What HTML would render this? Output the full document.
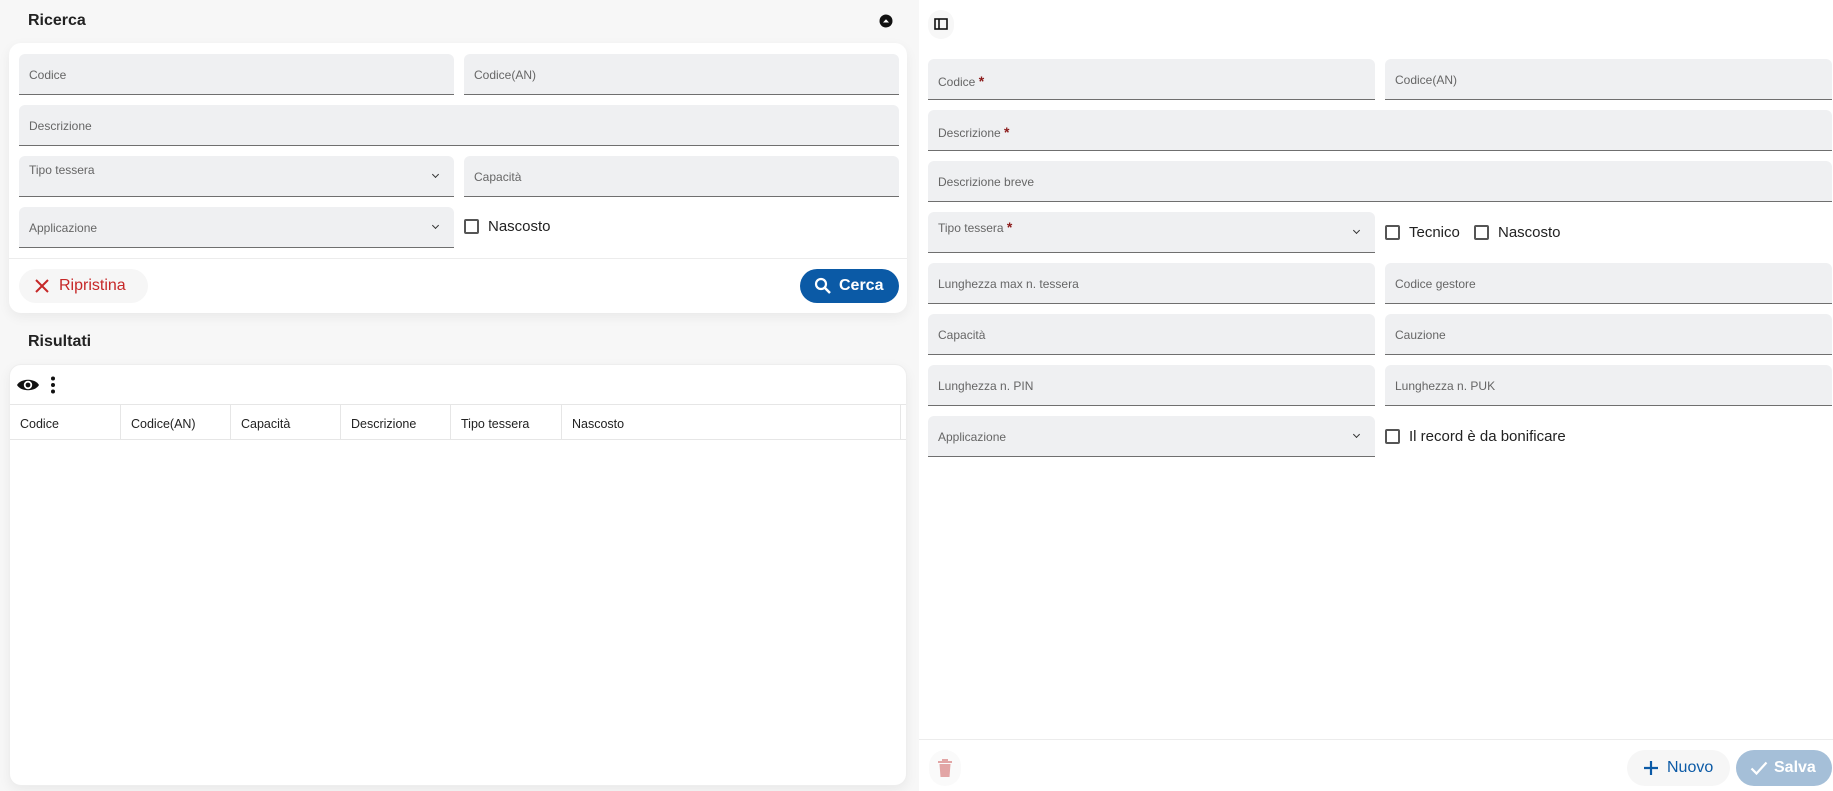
<!DOCTYPE html>
<html><head><meta charset="utf-8"><style>
*{box-sizing:border-box;margin:0;padding:0}
body{width:1833px;height:791px;overflow:hidden;font-family:"Liberation Sans",sans-serif;background:#f7f7f7;position:relative;color:#1d1d1d}
.abs{position:absolute}
.f{position:absolute;background:#eff0f2;border-bottom:1px solid #6f6f6f;border-radius:6px 6px 0 0;height:41px}
.f span{position:absolute;left:10px;top:14px;font-size:12px;color:#666}
.f span.t{top:7px}
.f .req{color:#8b1a1a;font-size:14px}
.f .chev{position:absolute;right:16px;top:16px;width:5px;height:5px;border-right:1.3px solid #333;border-bottom:1.3px solid #333;transform:rotate(45deg)}
.cb{position:absolute;display:flex;align-items:center;font-size:15px;color:#222}
.cb i{display:inline-block;width:15px;height:15px;border:2px solid #555;border-radius:2px;margin-right:9px}
.title{position:absolute;font-size:16px;font-weight:600;color:#222}
.card{position:absolute;background:#fff;border-radius:12px;box-shadow:0 4px 12px rgba(0,0,0,.06)}
</style></head><body>
<div class="title" style="left:28px;top:12px">Ricerca</div>
<svg class="abs" style="left:879px;top:14px" width="14" height="14" viewBox="0 0 14 14"><circle cx="7" cy="7" r="6.5" fill="#111"/><path d="M4 8.5L7 5.2 10 8.5z" fill="#fff"/></svg>
<div class="card" style="left:9px;top:43px;width:898px;height:270px"></div>
<div class="f" style="left:19px;top:54px;width:435px"><span>Codice</span></div>
<div class="f" style="left:464px;top:54px;width:435px"><span>Codice(AN)</span></div>
<div class="f" style="left:19px;top:105px;width:880px"><span>Descrizione</span></div>
<div class="f" style="left:19px;top:156px;width:435px"><span class="t">Tipo tessera</span><div class="chev"></div></div>
<div class="f" style="left:464px;top:156px;width:435px"><span>Capacità</span></div>
<div class="f" style="left:19px;top:207px;width:435px"><span>Applicazione</span><div class="chev"></div></div>
<div class="cb" style="left:464px;top:218px"><i></i>Nascosto</div>
<div class="abs" style="left:9px;top:258px;width:898px;height:1px;background:#ececec"></div>
<div class="abs" style="left:19px;top:269px;width:129px;height:34px;border-radius:17px;background:#f6f6f6;color:#c62828;font-size:16px;display:flex;align-items:center;padding-left:16px">
<svg width="14" height="14" viewBox="0 0 14 14" style="margin-right:10px"><path d="M1 1L13 13M13 1L1 13" stroke="#c62828" stroke-width="2"/></svg>Ripristina</div>
<div class="abs" style="left:800px;top:269px;width:99px;height:34px;border-radius:17px;background:#0b5aa6;color:#fff;font-size:16px;font-weight:bold;display:flex;align-items:center;padding-left:14px">
<svg width="18" height="18" viewBox="0 0 18 18" style="margin-right:7px"><circle cx="7" cy="7" r="5" stroke="#fff" stroke-width="2.2" fill="none"/><path d="M10.5 10.5L16 16" stroke="#fff" stroke-width="2.5"/></svg>Cerca</div>

<div class="title" style="left:28px;top:333px">Risultati</div>
<div class="card" style="left:9px;top:364px;width:898px;height:422px;border:1px solid #eee">
<svg class="abs" style="left:6px;top:12px" width="24" height="16" viewBox="0 0 24 16"><path d="M1 8C5 1 19 1 23 8 19 15 5 15 1 8z" fill="#111"/><circle cx="12" cy="8" r="4.2" fill="#fff"/><circle cx="12" cy="8" r="2.4" fill="#111"/></svg>
<svg class="abs" style="left:40px;top:11px" width="6" height="18" viewBox="0 0 6 18"><circle cx="3" cy="2.5" r="2" fill="#111"/><circle cx="3" cy="9" r="2" fill="#111"/><circle cx="3" cy="15.5" r="2" fill="#111"/></svg>
<div class="abs" style="left:0;top:39px;width:896px;height:36px;border-top:1px solid #e6e6e6;border-bottom:1px solid #e6e6e6;display:flex;font-size:12.5px;color:#222">
<div style="width:111px;border-right:1px solid #e6e6e6;padding:12px 0 0 10px">Codice</div>
<div style="width:110px;border-right:1px solid #e6e6e6;padding:12px 0 0 10px">Codice(AN)</div>
<div style="width:110px;border-right:1px solid #e6e6e6;padding:12px 0 0 10px">Capacità</div>
<div style="width:110px;border-right:1px solid #e6e6e6;padding:12px 0 0 10px">Descrizione</div>
<div style="width:111px;border-right:1px solid #e6e6e6;padding:12px 0 0 10px">Tipo tessera</div>
<div style="width:339px;border-right:1px solid #e6e6e6;padding:12px 0 0 10px">Nascosto</div>
</div>
</div>

<div class="abs" style="left:919px;top:0;width:914px;height:791px;background:#fff"></div>
<div class="abs" style="left:928px;top:10px;width:26px;height:29px;border-radius:13px;background:#f7f7f7"></div>
<svg class="abs" style="left:934px;top:18px" width="14" height="12" viewBox="0 0 14 12"><rect x="1" y="1" width="12" height="10" fill="none" stroke="#111" stroke-width="1.6"/><path d="M5 1V11" stroke="#111" stroke-width="1.6"/></svg>

<div class="f" style="left:928px;top:59px;width:447px"><span>Codice <b class="req">*</b></span></div>
<div class="f" style="left:1385px;top:59px;width:447px"><span>Codice(AN)</span></div>
<div class="f" style="left:928px;top:110px;width:904px"><span>Descrizione <b class="req">*</b></span></div>
<div class="f" style="left:928px;top:161px;width:904px"><span>Descrizione breve</span></div>
<div class="f" style="left:928px;top:212px;width:447px"><span class="t">Tipo tessera <b class="req">*</b></span><div class="chev"></div></div>
<div class="cb" style="left:1385px;top:224px"><i></i>Tecnico</div>
<div class="cb" style="left:1474px;top:224px"><i></i>Nascosto</div>
<div class="f" style="left:928px;top:263px;width:447px"><span>Lunghezza max n. tessera</span></div>
<div class="f" style="left:1385px;top:263px;width:447px"><span>Codice gestore</span></div>
<div class="f" style="left:928px;top:314px;width:447px"><span>Capacità</span></div>
<div class="f" style="left:1385px;top:314px;width:447px"><span>Cauzione</span></div>
<div class="f" style="left:928px;top:365px;width:447px"><span>Lunghezza n. PIN</span></div>
<div class="f" style="left:1385px;top:365px;width:447px"><span>Lunghezza n. PUK</span></div>
<div class="f" style="left:928px;top:416px;width:447px"><span>Applicazione</span><div class="chev"></div></div>
<div class="cb" style="left:1385px;top:428px"><i></i>Il record è da bonificare</div>

<div class="abs" style="left:919px;top:739px;width:914px;height:1px;background:#ececec"></div>
<div class="abs" style="left:929px;top:750px;width:32px;height:36px;border-radius:16px;background:#fafafa"></div>
<svg class="abs" style="left:937px;top:759px" width="16" height="18" viewBox="0 0 16 18"><rect x="1" y="2" width="14" height="2" fill="#e2a5a5"/><rect x="5" y="0" width="6" height="2" fill="#e2a5a5"/><path d="M2.5 5H13.5L12.5 18H3.5z" fill="#e2a5a5"/></svg>
<div class="abs" style="left:1627px;top:750px;width:103px;height:36px;border-radius:18px;background:#f6f6f6;color:#0b5aa6;font-size:16px;display:flex;align-items:center;padding-left:16px">
<svg width="16" height="16" viewBox="0 0 16 16" style="margin-right:8px"><path d="M8 1V15M1 8H15" stroke="#0b5aa6" stroke-width="2.2"/></svg>Nuovo</div>
<div class="abs" style="left:1736px;top:750px;width:96px;height:36px;border-radius:18px;background:#a5bfd8;color:#fff;font-size:16px;font-weight:bold;display:flex;align-items:center;padding-left:14px">
<svg width="18" height="16" viewBox="0 0 18 16" style="margin-right:6px"><path d="M1.5 8.5L6.5 13.5 16.5 2.5" stroke="#fff" stroke-width="2.2" fill="none"/></svg>Salva</div>
</body></html>
